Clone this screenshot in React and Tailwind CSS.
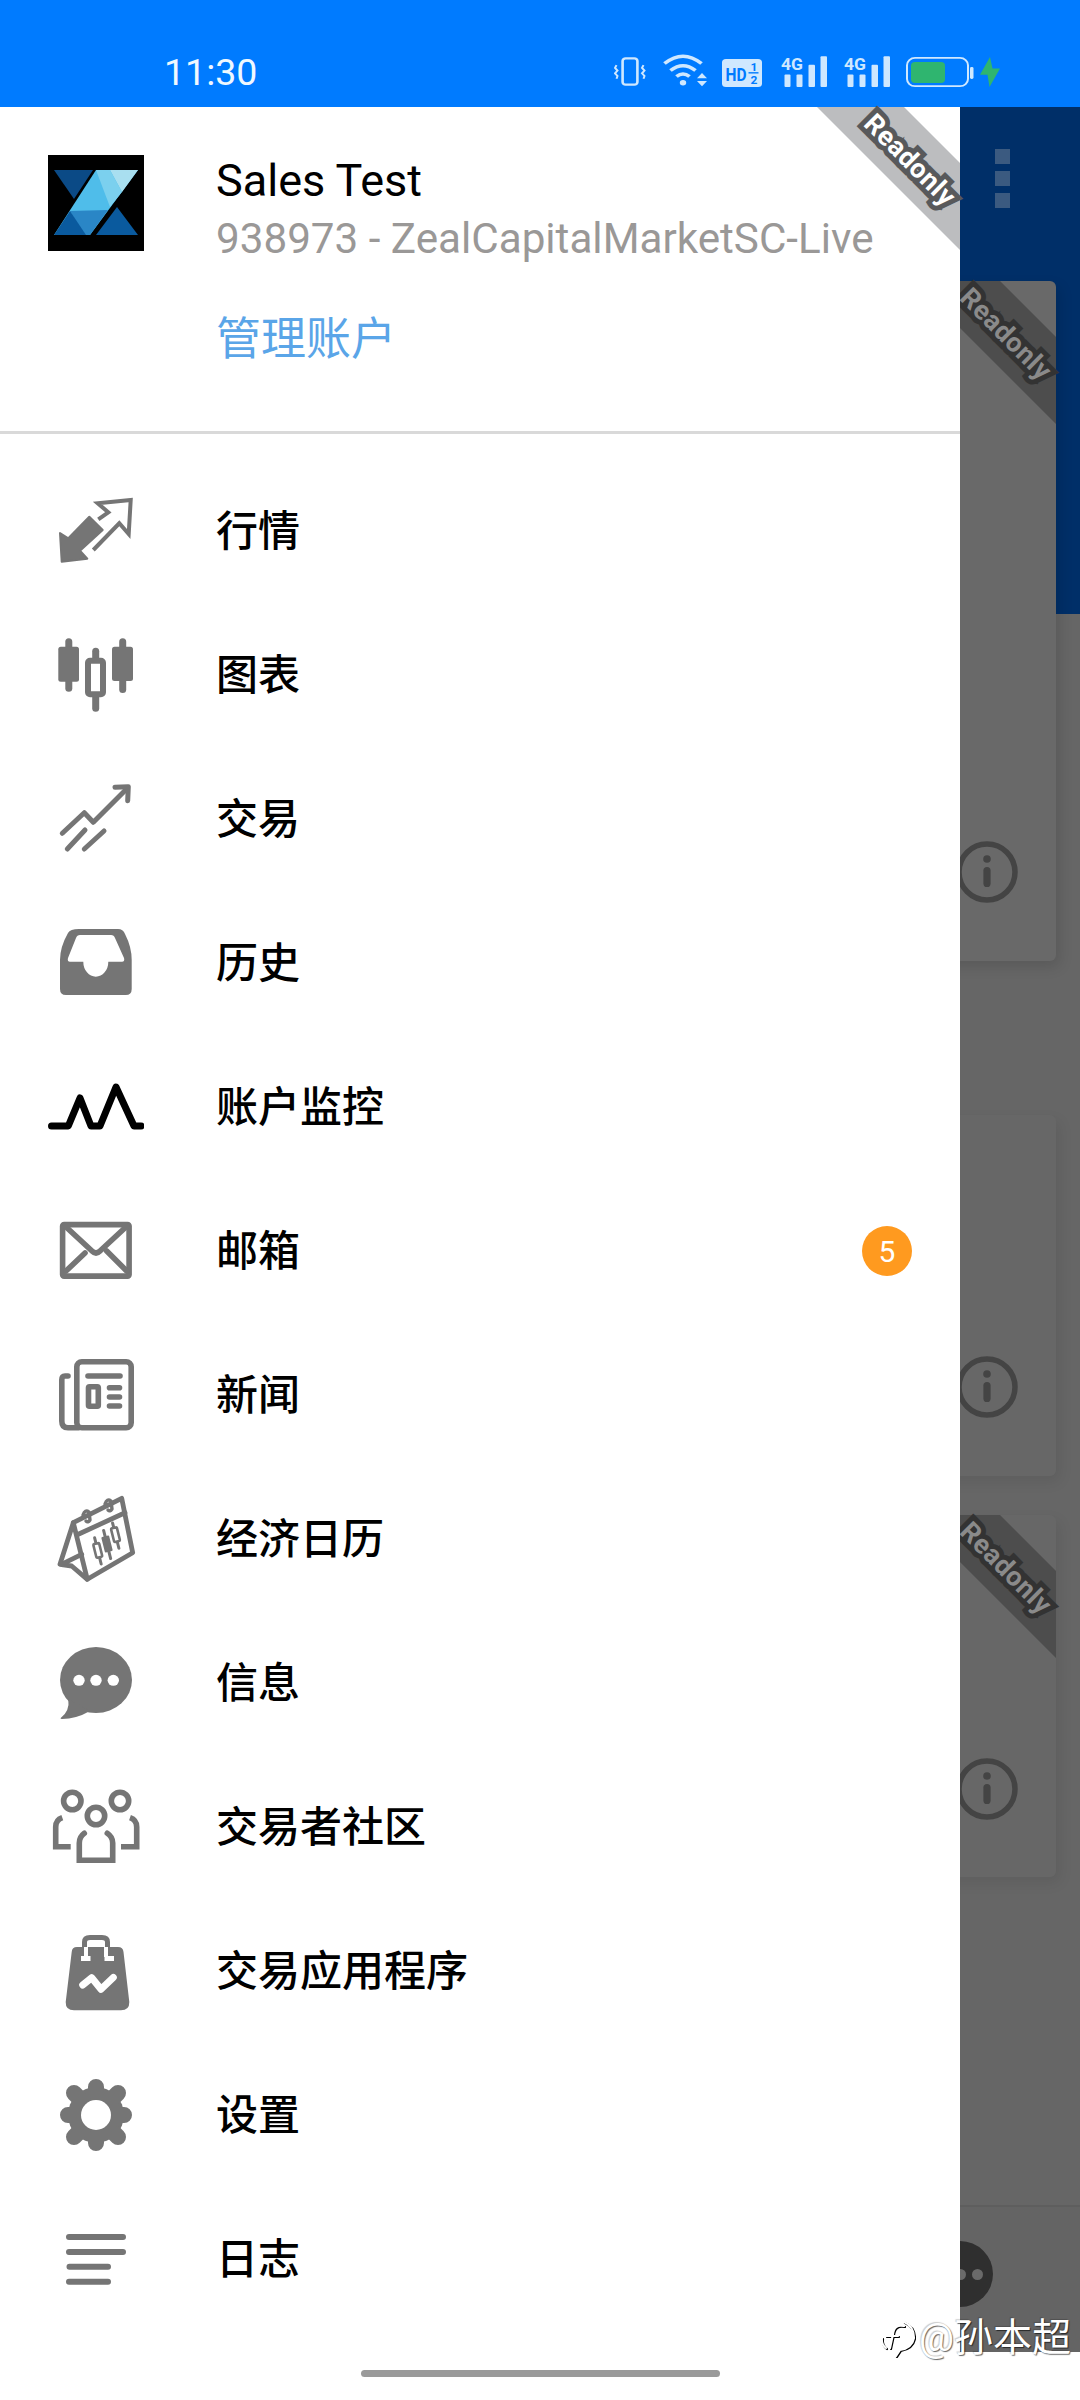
import React from "react";

const G = "#757575";
const Svg = ({ children }) => (
  <svg width="96" height="96" viewBox="0 0 96 96" className="shrink-0 block">{children}</svg>
);

const Quotes = () => (
  <Svg>
    <path d="M12 50 L13.7 78.7 L39.3 75.7 L32 67.7 L54.7 47 L41.3 33.7 L20.3 55.3 Z" fill={G} stroke={G} strokeWidth="2" strokeLinejoin="round" />
    <path d="M50.3 36.3 L60.3 29.3 L49.7 20.3 L82.7 17 L80.7 51 L71.3 40.3 L45.3 67" fill="none" stroke={G} strokeWidth="4" strokeLinejoin="miter" />
  </Svg>
);
const Charts = () => (
  <Svg>
    <g fill={G}>
      <rect x="17.3" y="11.3" width="7" height="53.4" rx="3.5" />
      <rect x="10.3" y="19.7" width="20.7" height="35" rx="2.5" />
      <rect x="44.2" y="20.7" width="7" height="64" rx="3.5" />
      <rect x="71.2" y="11.3" width="7" height="54.7" rx="3.5" />
      <rect x="64" y="19.7" width="21" height="34.3" rx="2.5" />
    </g>
    <rect x="40" y="33.7" width="15" height="33.6" rx="2" fill="#fff" stroke={G} strokeWidth="6" />
  </Svg>
);
const Trade = () => (
  <Svg>
    <g fill="none" stroke={G} strokeWidth="5" strokeLinecap="round" strokeLinejoin="round">
      <path d="M14.3 62.3 L36.3 41.7 L45.3 51.3 L79.3 17.3" />
      <path d="M67 16.3 L80.3 15.7 L79.7 29.7" />
      <path d="M19.3 78 L37 59" />
      <path d="M36.3 78 L56 60" />
    </g>
  </Svg>
);
const Tray = () => (
  <Svg>
    <path d="M31 14 H70 Q75 14 77 19 Q83.7 32 83.7 45 V74 Q83.7 80 77.7 80 H18 Q12 80 12 74 V45 Q12 32 20 18 Q22 14 31 14 Z" fill={G} />
    <path d="M32 20 H63 Q66 20 67 23 L76 43 Q77 46.7 74 46.7 H60.3 A12.5 15 0 0 1 35.3 46.7 H22 Q19 46.7 20 43 L28 23 Q29 20 32 20 Z" fill="#fff" />
  </Svg>
);
const Monitor = () => (
  <Svg>
    <path d="M3.5 67 H20.3 L32 39 L43 67 H52 L68 28 L86 67 H93" fill="none" stroke="#000" strokeWidth="7" strokeLinecap="round" strokeLinejoin="round" />
  </Svg>
);
const Mail = () => (
  <Svg>
    <g fill="none" stroke={G} strokeWidth="5.6" strokeLinejoin="round" strokeLinecap="round">
      <rect x="14.6" y="21.6" width="66.5" height="51.5" rx="1.5" />
      <path d="M17 23 L44 48 Q48 52 52 48 L79 23" />
      <path d="M37 50 L18 68" />
      <path d="M58.7 48 L78.7 68" />
    </g>
  </Svg>
);
const News = () => (
  <Svg>
    <g fill="none" stroke={G} strokeWidth="5.6" strokeLinecap="round">
      <rect x="28.8" y="14.8" width="54.4" height="66" rx="5" />
      <path d="M20 29 H17 Q13.8 29 13.8 33 V74 Q13.8 80.8 20 80.8 H30" />
      <path d="M40 29 H72" />
      <rect x="40.5" y="39.8" width="9.8" height="19.4" rx="1" />
      <path d="M61.5 40.7 H71.5 M61.5 50 H71.5 M61.5 59 H71.5" />
    </g>
  </Svg>
);
const Cal = () => (
  <Svg>
    <g fill="none" stroke={G} strokeWidth="4.8" strokeLinejoin="round" strokeLinecap="round">
      <path d="M25.3 31.7 L73.7 7.3 L84.7 61.7 L39.3 88.3 Z" />
      <path d="M30.3 43.3 L77 21.7" />
      <path d="M25.3 31.7 L12 73.3 L23.7 75 L39.3 88.3" />
      <path d="M17 71.7 L33.7 63.3" />
      <path d="M35 24 Q37 18 41 21 L42 29 Q40 32 38 30" strokeWidth="3.4" />
      <path d="M57 13 Q59 7 63 10 L64 18 Q62 21 60 19" strokeWidth="3.4" />
    </g>
    <g transform="rotate(-14 59 53)">
      <g stroke={G} strokeWidth="3" strokeLinecap="round">
        <path d="M48.5 44 V71 M59 39 V68 M69.5 34 V60" />
      </g>
      <rect x="45.5" y="50" width="6" height="14" rx="1" fill="#fff" stroke={G} strokeWidth="2.6" />
      <rect x="55" y="45" width="8" height="16" rx="1" fill={G} />
      <rect x="66.5" y="39" width="6" height="14" rx="1" fill="#fff" stroke={G} strokeWidth="2.6" />
    </g>
  </Svg>
);
const Msg = () => (
  <Svg>
    <ellipse cx="48" cy="45" rx="36" ry="33" fill={G} />
    <path d="M20.3 64 Q22 76 12.7 83 Q12 84 14 84 Q28 84 42 76 Z" fill={G} />
    <ellipse cx="31" cy="45.3" rx="5.7" ry="5.5" fill="#fff" />
    <ellipse cx="48" cy="45.3" rx="5.7" ry="5.5" fill="#fff" />
    <ellipse cx="65.3" cy="45.3" rx="5.7" ry="5.5" fill="#fff" />
  </Svg>
);
const People = () => (
  <Svg>
    <g fill="none" stroke={G} strokeWidth="5.6">
      <circle cx="24.3" cy="22" r="8.7" />
      <circle cx="72" cy="22" r="8.7" />
      <circle cx="48" cy="37" r="8.7" />
      <path d="M36.3 54.3 Q31.3 58 31.3 64 V81.3 H64.7 V64 Q64.7 58 59.3 54.3" strokeLinecap="round" />
      <path d="M14.3 38.7 Q7.7 41 7.7 48 V67.7 H22.7" strokeLinecap="butt" />
      <path d="M82 38.7 Q88.7 41 88.7 48 V67.7 H73" strokeLinecap="butt" />
    </g>
  </Svg>
);
const Bag = () => (
  <Svg>
    <path d="M29 24 H70 Q75 24 75.5 29 L81.3 79 Q81.5 87.3 73 87.3 H26 Q17.5 87.3 17.7 79 L23.7 29 Q24 24 29 24 Z" fill={G} />
    <path d="M36.5 24 V19 Q36.5 14.5 42 14.5 H54 Q59.5 14.5 59.5 19 V24" fill="none" stroke={G} strokeWidth="5" />
    <g fill="#fff">
      <rect x="36" y="24" width="4" height="10" />
      <rect x="56" y="24" width="4" height="10" />
      <rect x="33" y="33" width="9.5" height="5" />
      <rect x="56.5" y="33" width="9.5" height="5" />
    </g>
    <path d="M34.7 62 L43.7 54.7 L53 66.3 L65.3 54.5" fill="none" stroke="#fff" strokeWidth="7" strokeLinecap="round" strokeLinejoin="round" />
  </Svg>
);
const Gear = () => (
  <Svg>
    <circle cx="48" cy="48" r="28" fill={G} />
    <g stroke={G} strokeWidth="16" strokeLinecap="round">
      <path d="M48 20 V76 M20 48 H76" />
      <path d="M26 26 L70 70 M70 26 L26 70" />
    </g>
    <circle cx="48" cy="48" r="15" fill="#fff" />
  </Svg>
);
const Logs = () => (
  <Svg>
    <g stroke={G} strokeWidth="6" strokeLinecap="round">
      <path d="M21 26 H75 M21 41 H75 M21.5 55.7 H60 M21 70.7 H60" />
    </g>
  </Svg>
);

const items = [
  [Quotes, "行情"],
  [Charts, "图表"],
  [Trade, "交易"],
  [Tray, "历史"],
  [Monitor, "账户监控"],
  [Mail, "邮箱", 5],
  [News, "新闻"],
  [Cal, "经济日历"],
  [Msg, "信息"],
  [People, "交易者社区"],
  [Bag, "交易应用程序"],
  [Gear, "设置"],
  [Logs, "日志"],
];

const L = "#cfe8ff";

const Vibrate = () => (
  <svg width="32" height="29" viewBox="0 0 32 32" preserveAspectRatio="none" className="block">
    <rect x="8.6" y="1.5" width="14.8" height="29" rx="3" fill="none" stroke={L} strokeWidth="2.6" />
    <path d="M2.5 9 L1 12 L3.5 15 L1 18 L3.5 21 L2.5 24" fill="none" stroke={L} strokeWidth="2" />
    <path d="M29.5 9 L28 12 L30.5 15 L28 18 L30.5 21 L29.5 24" fill="none" stroke={L} strokeWidth="2" />
  </svg>
);
const Wifi = () => (
  <svg width="44" height="33" viewBox="0 0 44 38" preserveAspectRatio="none" className="block">
    <g fill="none" stroke={L} strokeWidth="3.8">
      <path d="M1.5 11 Q20 -6 38.5 11" />
      <path d="M7.5 19 Q20 8 32.5 19" />
      <path d="M13.5 26 Q20 20 26.5 26" />
    </g>
    <circle cx="20" cy="33" r="3.2" fill={L} />
    <path d="M39 22 L44 28 H34 Z M34 31 H44 L39 37 Z" fill={L} />
  </svg>
);
const Hd = () => (
  <svg width="40" height="28" viewBox="0 0 40 32" preserveAspectRatio="none" className="block overflow-visible">
    <rect width="40" height="32" rx="4" fill={L} />
    <text x="3.5" y="25" fontFamily="Roboto" fontWeight="700" fontSize="22" fill="#007bff" textLength="21" lengthAdjust="spacingAndGlyphs">HD</text>
    <text x="28.5" y="14" fontFamily="Roboto" fontWeight="700" fontSize="12" fill="#007bff">1</text>
    <text x="28.5" y="28.5" fontFamily="Roboto" fontWeight="700" fontSize="12" fill="#007bff">2</text>
    <rect x="26.5" y="15" width="10" height="1.6" fill="#007bff" />
  </svg>
);
const Signal = () => (
  <svg width="46" height="32" viewBox="0 0 46 36" preserveAspectRatio="none" className="block overflow-visible">
    <text x="0" y="17" fontFamily="Roboto" fontWeight="700" fontSize="19" fill={L} textLength="22" lengthAdjust="spacingAndGlyphs">4G</text>
    <g fill={L}>
      <rect x="3.5" y="22" width="6" height="14" rx="1" />
      <rect x="15.5" y="22" width="6" height="14" rx="1" />
      <rect x="27.5" y="11" width="6.5" height="25" rx="1" />
      <rect x="39.5" y="1.5" width="6.5" height="34.5" rx="1" />
    </g>
  </svg>
);
const Battery = () => (
  <svg width="68" height="31" viewBox="0 0 68 34" preserveAspectRatio="none" className="block">
    <rect x="1" y="1" width="61" height="31" rx="8" fill="none" stroke={L} strokeWidth="2" />
    <rect x="5" y="5.5" width="34" height="23" rx="4" fill="#2fb56f" />
    <rect x="64" y="11" width="3.5" height="13" rx="1.5" fill={L} />
  </svg>
);
const Bolt = () => (
  <svg width="20" height="30" viewBox="0 0 20 34" preserveAspectRatio="none" className="block">
    <path d="M10 0 L0 20 H7.5 L9.5 34 L20 13 H12.5 Z" fill="#2fb56f" />
  </svg>
);

const Logo = () => (
  <svg width="96" height="96" viewBox="0 0 96 96" className="block shrink-0">
    <rect width="96" height="96" fill="#000" />
    <path d="M6 15 H45 L26 44 Z" fill="#0b4a86" />
    <path d="M48 15 H90 L42 80 H6 Z" fill="#4fbdea" />
    <path d="M62 15 H90 L74 37 Z" fill="#a9dff0" />
    <path d="M48 15 H62 L74 37 L62 52 Z" fill="#7bd0ee" />
    <path d="M22 56 L60 55 L42 80 H36 Z" fill="#2a86c6" />
    <path d="M6 80 L22 56 L38 80 Z" fill="#0a5a9e" />
    <path d="M48 80 L69 52 L90 80 Z" fill="#0a5a9e" />
  </svg>
);

const Ribbon = ({ band, text, stroke }) => (
  <div className="absolute top-0 right-0 w-[143px] h-[143px]">
    <div className="absolute inset-0 [clip-path:polygon(0_0,87px_0,143px_56px,143px_143px)]" style={{ background: band }} />
    <span
      className="absolute left-[33px] top-[36px] w-[120px] text-center rotate-45 text-[27px] leading-[34px] font-bold tracking-[0.5px] whitespace-nowrap [-webkit-text-stroke-width:10px] [paint-order:stroke_fill] [stroke-linejoin:round]"
      style={{ color: text, WebkitTextStrokeColor: stroke }}
    >
      Readonly
    </span>
  </div>
);

const Info = ({ top }) => (
  <svg width="66" height="66" viewBox="0 0 66 66" className="absolute right-[36px]" style={{ top }}>
    <circle cx="33" cy="33" r="28" fill="none" stroke="#444" strokeWidth="5.5" />
    <circle cx="33" cy="20" r="3.8" fill="#444" />
    <rect x="29.4" y="28" width="7.2" height="20" rx="3.6" fill="#444" />
  </svg>
);

export default function App() {
  return (
    <div className="relative w-[1080px] h-[2400px] flex flex-col overflow-hidden bg-white font-['Roboto','Noto_Sans_CJK_SC',sans-serif]">
      <div className="h-[107px] shrink-0 bg-[#007bff] flex items-start justify-between pl-[164px] pr-[80px]">
        <span className="text-[37.5px] leading-[40px] mt-[52px] text-[#f0f8ff]">11:30</span>
        <div className="flex items-start mt-[54px]">
          <div className="mt-[3px]"><Vibrate /></div>
          <div className="ml-[17px]"><Wifi /></div>
          <div className="ml-[15px] mt-[5px]"><Hd /></div>
          <div className="ml-[19px] mt-[1px]"><Signal /></div>
          <div className="ml-[17px] mt-[1px]"><Signal /></div>
          <div className="ml-[16px] mt-[3px]"><Battery /></div>
          <div className="ml-[6px] mt-[3px]"><Bolt /></div>
        </div>
      </div>

      <div className="relative flex-1 bg-[#666666] overflow-hidden">
        <div className="h-[507px] bg-[#002f68] flex justify-end pr-[70px] pt-[42px]">
          <div className="flex flex-col gap-[7px] items-center">
            <div className="w-[15px] h-[15px] bg-[#3b5a80]" />
            <div className="w-[15px] h-[15px] bg-[#3b5a80]" />
            <div className="w-[15px] h-[15px] bg-[#3b5a80]" />
          </div>
        </div>
        <div className="absolute inset-x-0 top-[174px] flex flex-col pl-[24px] pr-[24px]">
          <div className="relative h-[680px] rounded-[6px] bg-[#696969] shadow-[4px_6px_14px_rgba(0,0,0,0.12)]">
            <Ribbon band="#4d4d4d" text="#8a8a8a" stroke="#333" />
            <Info top={558} />
          </div>
          <div className="relative mt-[154px] h-[361px] rounded-[6px] bg-[#676767] shadow-[4px_6px_14px_rgba(0,0,0,0.08)]">
            <Info top={239} />
          </div>
          <div className="relative mt-[39px] h-[362px] rounded-[6px] bg-[#676767] shadow-[4px_6px_14px_rgba(0,0,0,0.08)]">
            <Ribbon band="#4d4d4d" text="#8a8a8a" stroke="#333" />
            <Info top={241} />
          </div>
        </div>
        <div className="absolute inset-x-0 top-[2098px] h-[147px] border-t-2 border-[#5e5e5e] bg-[#646464]">
          <div className="absolute left-[927px] top-[34px] w-[66px] h-[66px] rounded-full bg-[#2f2f2f] flex items-center justify-center gap-[6px]">
            <div className="w-[11px] h-[11px] rounded-full bg-[#6a6a6a]" />
            <div className="w-[11px] h-[11px] rounded-full bg-[#6a6a6a]" />
            <div className="w-[11px] h-[11px] rounded-full bg-[#6a6a6a]" />
          </div>
        </div>
      </div>

      <div className="h-[48px] shrink-0 bg-white" />

      <div className="absolute left-0 top-[107px] bottom-0 w-[960px] bg-white flex flex-col">
        <div className="relative h-[327px] shrink-0 border-b-[3px] border-[#d9d9d9] flex items-start pl-[48px]">
          <div className="mt-[48px]"><Logo /></div>
          <div className="ml-[72px] mt-[45px] flex flex-col">
            <span className="text-[45px] leading-[58px] text-black">Sales Test</span>
            <span className="mt-[2px] text-[42.2px] leading-[54px] text-[#9a9897]">938973 - ZealCapitalMarketSC-Live</span>
            <span className="mt-[44px] text-[45px] leading-[60px] text-[#5aa5e8]">管理账户</span>
          </div>
          <Ribbon band="#bcbdbf" text="#ffffff" stroke="#58595b" />
        </div>
        <div className="pt-[26px] flex flex-col">
          {items.map(([Icon, label, badge]) => (
            <div key={label} className="relative h-[144px] flex items-center pl-[48px] pr-[48px]">
              <div className="-mt-[2px]"><Icon /></div>
              <span className="ml-[72px] flex-1 text-[42px] leading-[60px] font-medium text-black">{label}</span>
              {badge ? (
                <span className="-mt-[2px] w-[50px] h-[50px] rounded-full bg-[#ff9a1f] text-white text-[30px] flex items-center justify-center">{badge}</span>
              ) : null}
            </div>
          ))}
        </div>
      </div>

      <div className="absolute left-[361px] top-[2370px] w-[359px] h-[7px] rounded-full bg-[#9a9a9a]" />

      <div className="absolute left-[880px] top-[2315px] flex items-center text-white text-[39px] leading-[46px] [text-shadow:1px_1px_1px_rgba(0,0,0,0.6),-1px_-1px_1px_rgba(0,0,0,0.2)]">
        <svg width="36" height="40" viewBox="0 0 36 40" className="mr-[3px] block">
          <g fill="none" strokeLinecap="round" strokeWidth="2.2">
            <path transform="translate(1 1)" stroke="#000" d="M6 30 Q1 26 2 20 M24 8 Q14 6 13 16 L10 30 M6 18 H18 M24 4 Q34 8 34 20 Q32 30 20 32 L16 38" />
            <path stroke="#fff" d="M6 30 Q1 26 2 20 M24 8 Q14 6 13 16 L10 30 M6 18 H18 M24 4 Q34 8 34 20 Q32 30 20 32 L16 38" />
          </g>
        </svg>
        <span>@孙本超</span>
      </div>
    </div>
  );
}
